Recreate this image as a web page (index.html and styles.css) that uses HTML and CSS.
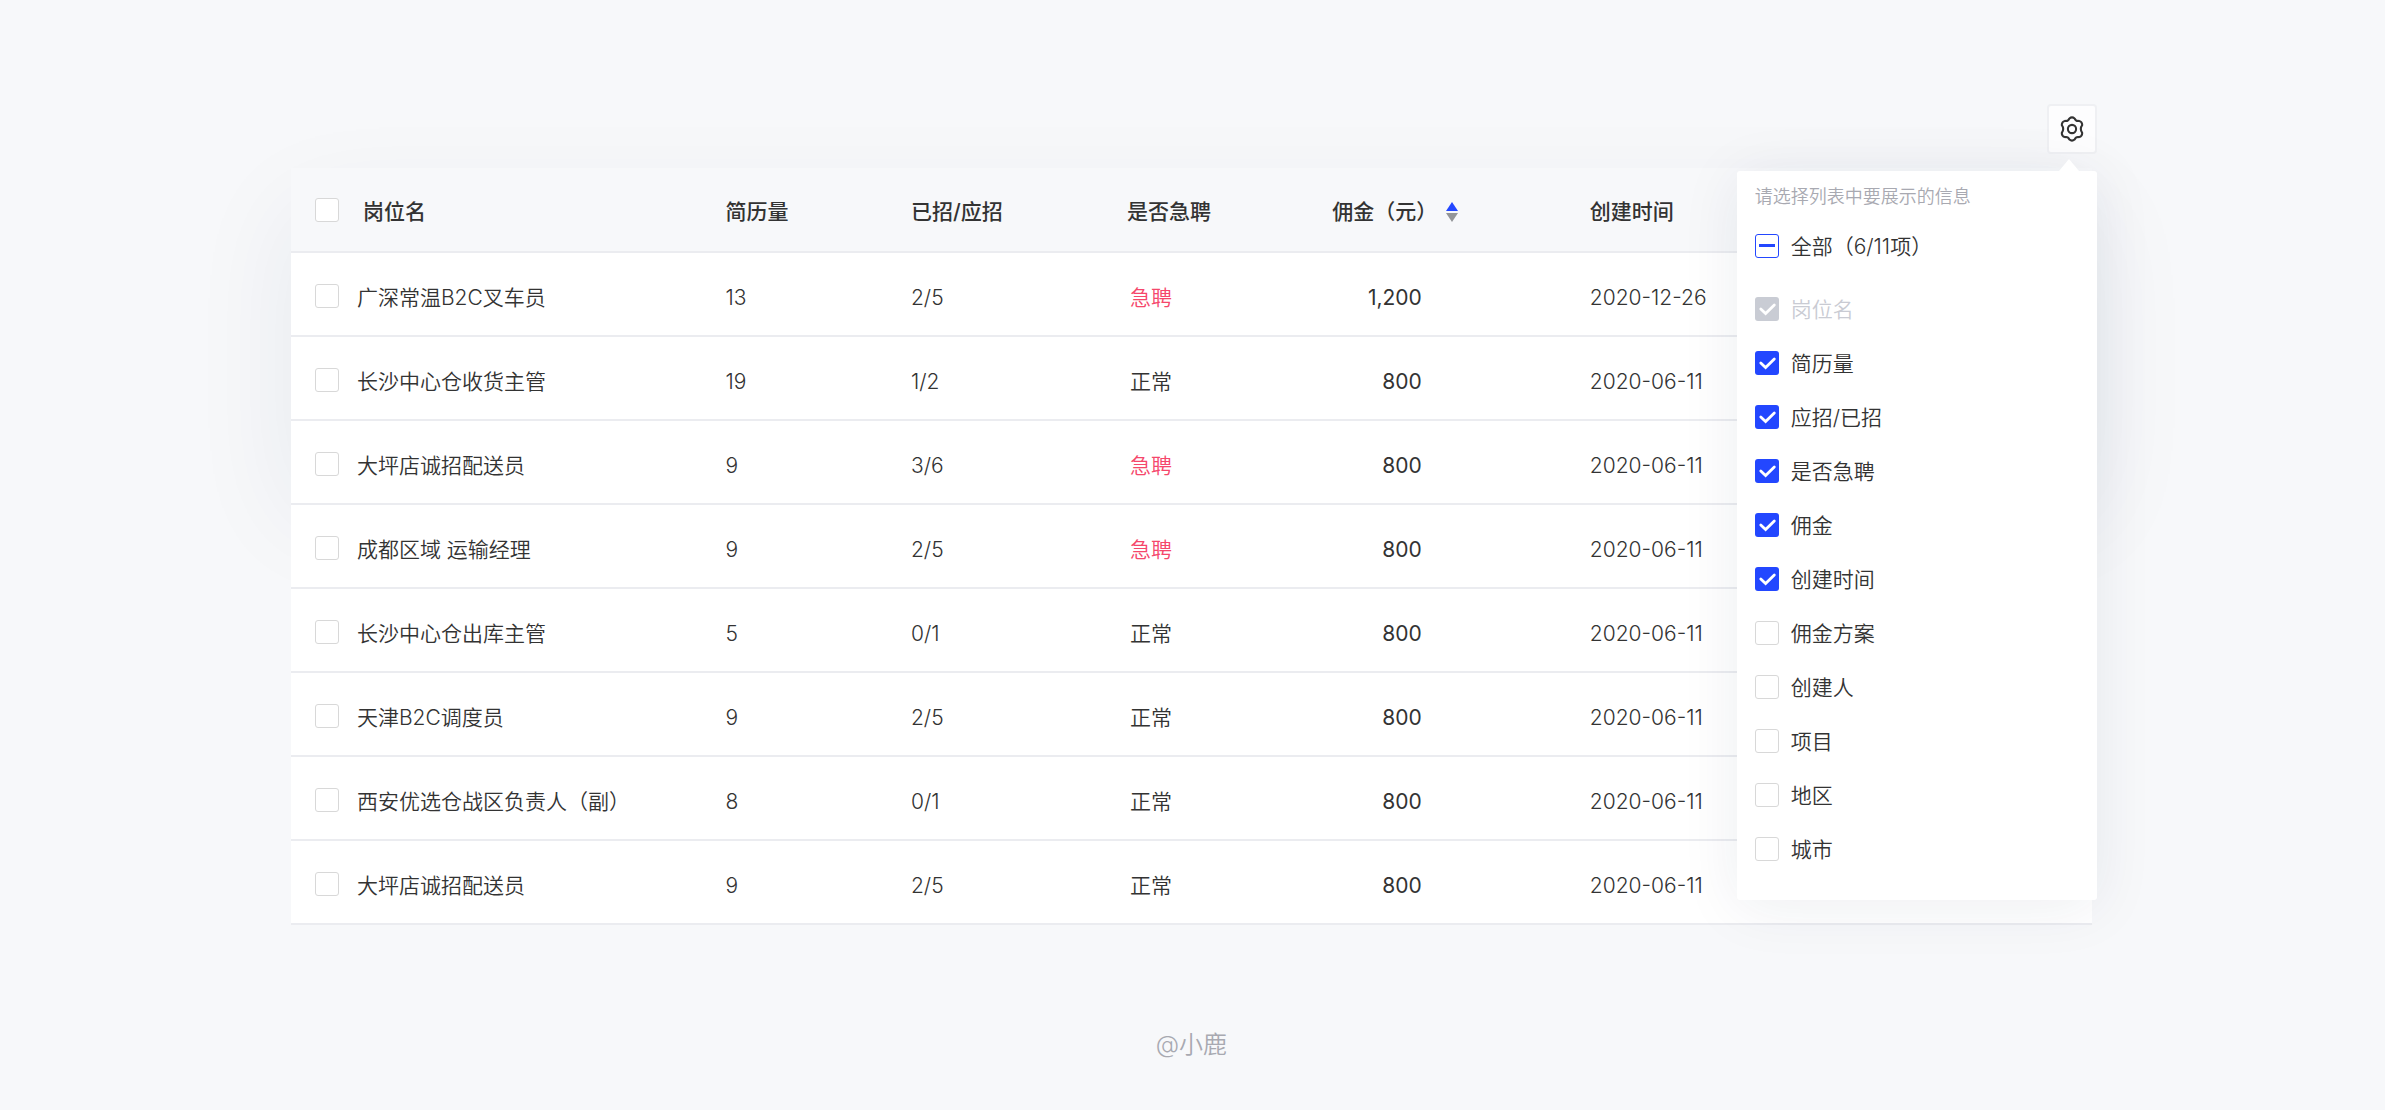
FILE: index.html
```
<!DOCTYPE html>
<html lang="zh-CN">
<head>
    <meta charset="UTF-8">
    <meta name="viewport" content="width=device-width, initial-scale=1.0">
    <title>岗位列表</title>
    <link rel="stylesheet" href="styles.css">
</head>
<body>
    <main class="page">
        <div class="toolbar">
            <div class="settings">
                <button type="button" class="settings-button" aria-label="列表设置">
                    <svg viewBox="0 0 24 24" width="26" height="26" fill="none" stroke="currentColor" stroke-width="1.9" stroke-linejoin="round">
                        <path d="M9.6 2.3Q12 .3 14.4 2.3C15.3 4.4 16.2 5 18.5 4.5Q21.6 5.4 21.4 8.5C19.8 10.7 19.8 13.3 21.4 15.5Q21.6 18.6 18.5 19.5C16.2 19 15.3 19.6 14.4 21.7Q12 23.7 9.6 21.7C8.7 19.6 7.8 19 5.5 19.5Q2.4 18.6 2.6 15.5C4.2 13.3 4.2 10.7 2.6 8.5Q2.4 5.4 5.5 4.5C7.8 5 8.7 4.4 9.6 2.3Z"/>
                        <circle cx="12" cy="12" r="3.8"/>
                    </svg>
                </button>

                <!-- Column picker -->
                <div class="column-panel">
                    <p class="panel-hint">请选择列表中要展示的信息</p>
                    <label class="option option-all"><input type="checkbox" class="checkbox partial">全部（6/11项）</label>
                    <label class="option disabled"><input type="checkbox" class="checkbox" checked disabled>岗位名</label>
                    <label class="option"><input type="checkbox" class="checkbox" checked>简历量</label>
                    <label class="option"><input type="checkbox" class="checkbox" checked>应招/已招</label>
                    <label class="option"><input type="checkbox" class="checkbox" checked>是否急聘</label>
                    <label class="option"><input type="checkbox" class="checkbox" checked>佣金</label>
                    <label class="option"><input type="checkbox" class="checkbox" checked>创建时间</label>
                    <label class="option"><input type="checkbox" class="checkbox">佣金方案</label>
                    <label class="option"><input type="checkbox" class="checkbox">创建人</label>
                    <label class="option"><input type="checkbox" class="checkbox">项目</label>
                    <label class="option"><input type="checkbox" class="checkbox">地区</label>
                    <label class="option"><input type="checkbox" class="checkbox">城市</label>
                </div>
            </div>
        </div>

        <div class="table-card">
            <table class="job-table">
                <thead>
                    <tr>
                        <th class="col-name"><label class="name-cell"><input type="checkbox" class="checkbox">岗位名</label></th>
                        <th class="col-resume">简历量</th>
                        <th class="col-hired">已招/应招</th>
                        <th class="col-urgent">是否急聘</th>
                        <th class="col-fee">
                            <button type="button" class="sort-button">佣金（元）<svg viewBox="0 0 12 20" width="12" height="20"><path d="M6 0L12 9H0Z" fill="#2347ff"/><path d="M0 11H12L6 20Z" fill="#939598"/></svg></button>
                        </th>
                        <th class="col-date">创建时间</th>
                    </tr>
                </thead>
                <tbody>
                    <tr>
                        <td><label class="name-cell"><input type="checkbox" class="checkbox">广深常温B2C叉车员</label></td>
                        <td>13</td>
                        <td>2/5</td>
                        <td class="status urgent">急聘</td>
                        <td class="fee">1,200</td>
                        <td>2020-12-26</td>
                    </tr>
                    <tr>
                        <td><label class="name-cell"><input type="checkbox" class="checkbox">长沙中心仓收货主管</label></td>
                        <td>19</td>
                        <td>1/2</td>
                        <td class="status">正常</td>
                        <td class="fee">800</td>
                        <td>2020-06-11</td>
                    </tr>
                    <tr>
                        <td><label class="name-cell"><input type="checkbox" class="checkbox">大坪店诚招配送员</label></td>
                        <td>9</td>
                        <td>3/6</td>
                        <td class="status urgent">急聘</td>
                        <td class="fee">800</td>
                        <td>2020-06-11</td>
                    </tr>
                    <tr>
                        <td><label class="name-cell"><input type="checkbox" class="checkbox">成都区域 运输经理</label></td>
                        <td>9</td>
                        <td>2/5</td>
                        <td class="status urgent">急聘</td>
                        <td class="fee">800</td>
                        <td>2020-06-11</td>
                    </tr>
                    <tr>
                        <td><label class="name-cell"><input type="checkbox" class="checkbox">长沙中心仓出库主管</label></td>
                        <td>5</td>
                        <td>0/1</td>
                        <td class="status">正常</td>
                        <td class="fee">800</td>
                        <td>2020-06-11</td>
                    </tr>
                    <tr>
                        <td><label class="name-cell"><input type="checkbox" class="checkbox">天津B2C调度员</label></td>
                        <td>9</td>
                        <td>2/5</td>
                        <td class="status">正常</td>
                        <td class="fee">800</td>
                        <td>2020-06-11</td>
                    </tr>
                    <tr>
                        <td><label class="name-cell"><input type="checkbox" class="checkbox">西安优选仓战区负责人（副）</label></td>
                        <td>8</td>
                        <td>0/1</td>
                        <td class="status">正常</td>
                        <td class="fee">800</td>
                        <td>2020-06-11</td>
                    </tr>
                    <tr>
                        <td><label class="name-cell"><input type="checkbox" class="checkbox">大坪店诚招配送员</label></td>
                        <td>9</td>
                        <td>2/5</td>
                        <td class="status">正常</td>
                        <td class="fee">800</td>
                        <td>2020-06-11</td>
                    </tr>
                </tbody>
            </table>
        </div>

        <footer class="credit">@小鹿</footer>
    </main>
</body>
</html>
```
FILE: styles.css
```
* {
    box-sizing: border-box;
}

body {
    margin: 0;
    font-family: Inter, "Noto Sans CJK SC", sans-serif;
    font-size: 21px;
    font-weight: 350;
    line-height: 30px;
    color: #333;
    background-color: #f7f8fa;
}

button {
    font: inherit;
    color: inherit;
    cursor: pointer;
}

.page {
    min-height: 100vh;
    padding: 104px 12.3% 32px 12.2%;
}

.toolbar {
    display: flex;
    justify-content: flex-end;
    margin: 0 -5px 14px 0;
}

.settings {
    position: relative;
    z-index: 2;
}

.settings-button {
    display: flex;
    align-items: center;
    justify-content: center;
    width: 50px;
    height: 50px;
    padding: 0;
    border: 2px solid #eff0f3;
    border-radius: 4px;
    background-color: #fdfdfe;
}

/* Column picker */
.column-panel {
    position: absolute;
    top: 67px;
    right: 0;
    width: 360px;
    padding: 12px 18px 33px;
    border-radius: 3px;
    background-color: #fff;
    box-shadow: 0 6px 60px rgba(30, 40, 80, 0.08);
}

.column-panel::before {
    content: "";
    position: absolute;
    top: -12px;
    right: 18px;
    border: 10px solid transparent;
    border-top: 0;
    border-bottom: 12px solid #fff;
}

.panel-hint {
    margin: 0 0 18px;
    font-size: 18px;
    line-height: 27px;
    color: #a8a9b1;
}

.option {
    display: flex;
    align-items: center;
    gap: 12px;
    height: 36px;
    padding-top: 2px;
    margin-top: 18px;
    cursor: pointer;
}

.option-all {
    margin-bottom: 27px;
}

.option.disabled {
    color: #c9cbd3;
    cursor: default;
}

.checkbox {
    appearance: none;
    flex: none;
    width: 24px;
    height: 24px;
    margin: 0 0 3px;
    border: 1px solid #d8d8d8;
    border-radius: 3px;
    background: #fff center / 100% no-repeat;
}

.checkbox:checked {
    border: 0;
    background-color: #2347ff;
    background-image: url("data:image/svg+xml,%3Csvg xmlns='http://www.w3.org/2000/svg' viewBox='0 0 24 24'%3E%3Cpath d='M5.8 12l4.8 4.6L19.3 8' fill='none' stroke='white' stroke-width='2.8' stroke-linecap='round'/%3E%3C/svg%3E");
}

.checkbox:disabled {
    background-color: #c9ccd4;
}

.checkbox.partial {
    border-color: #2347ff;
    background-image: linear-gradient(#2347ff, #2347ff);
    background-size: 16px 3px;
}

/* Table */
.table-card {
    position: relative;
    z-index: 1;
}

.table-card::before {
    content: "";
    position: absolute;
    z-index: -1;
    inset: 42px 0 54%;
    box-shadow: 0 0 100px rgba(30, 40, 80, 0.07);
}

.job-table {
    width: 100%;
    table-layout: fixed;
    border-collapse: separate;
    border-spacing: 0;
    background-color: #fff;
}

.job-table th,
.job-table td {
    height: 84px;
    padding: 8px 0 0 24px;
    border-bottom: 2px solid #ebecf0;
    text-align: left;
    white-space: nowrap;
}

.job-table th {
    height: 85px;
    padding-top: 4px;
    background-color: #f7f8fa;
    font-weight: 500;
}

.col-name {
    width: 22.8%;
}

.col-resume {
    width: 10.3%;
}

.col-hired {
    width: 12%;
}

.col-urgent {
    width: 11.4%;
}

.col-fee {
    width: 14.3%;
}

.name-cell {
    display: flex;
    align-items: center;
    gap: 18px;
}

.job-table th .name-cell {
    gap: 24px;
}

.job-table .checkbox {
    margin-bottom: 4px;
}

.sort-button {
    display: flex;
    align-items: center;
    gap: 9px;
    padding: 0;
    border: 0;
    background: none;
}

.job-table .status {
    padding-left: 27px;
}

.urgent {
    color: #f5476b;
}

.job-table .fee {
    padding-right: 144px;
    text-align: right;
    font-weight: 400;
}

.credit {
    margin-top: 102px;
    font-size: 24px;
    line-height: 36px;
    text-align: center;
    color: #a8a9b1;
}
```
